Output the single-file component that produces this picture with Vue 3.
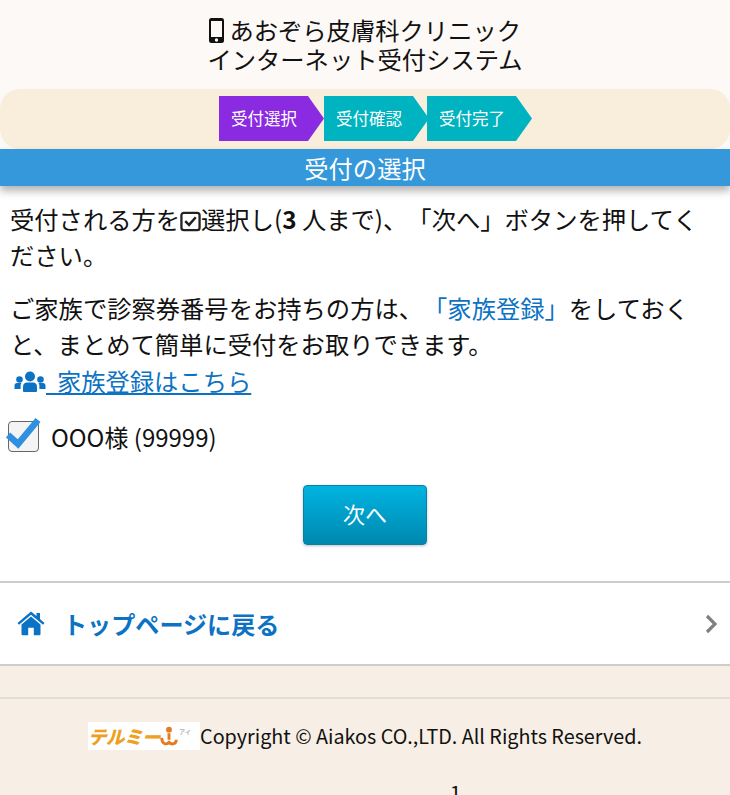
<script setup>
const steps = [
  { label: '受付選択', active: true },
  { label: '受付確認', active: false },
  { label: '受付完了', active: false },
];
</script>

<template>
  <div class="page">
    <header class="head">
      <h1 class="title">
        <svg class="phone" viewBox="0 0 15 25" width="15" height="25">
          <path fill="#111" fill-rule="evenodd" d="M2.500 0h10A2.500 2.500 0 0 1 15 2.500v20a2.500 2.500 0 0 1-2.500 2.500h-10A2.500 2.500 0 0 1 0 22.500v-20A2.500 2.500 0 0 1 2.500 0zM2 3v16h11V3zM7.500 20.300a1.700 1.700 0 1 0 0 3.400 1.700 1.700 0 0 0 0-3.400z"/>
        </svg>
        あおぞら皮膚科クリニック<br>インターネット受付システム
      </h1>
    </header>

    <div class="stepbar">
      <div v-for="s in steps" :key="s.label" :class="['step', { active: s.active }]">{{ s.label }}</div>
    </div>

    <h2 class="heading">受付の選択</h2>

    <main class="content">
      <p class="para">受付される方を<svg class="inline-check" viewBox="0 0 22 22" width="21" height="21"><rect x="1.500" y="2" width="19" height="18" rx="2.500" fill="none" stroke="#222" stroke-width="2.400"/><path d="M5.500 10.500l4 4 7-8" fill="none" stroke="#222" stroke-width="2.600"/></svg>選択し(<b>3</b> 人まで)、「次へ」ボタンを押してください。</p>
      <p class="para second">ご家族で診察券番号をお持ちの方は、<span class="blue">「家族登録」</span>をしておくと、まとめて簡単に受付をお取りできます。</p>
      <a class="family" href="#">
        <svg class="users" viewBox="0 0 32 22" width="32" height="22">
          <g fill="#0c72c4">
            <circle cx="16" cy="5.500" r="5"/>
            <circle cx="5.500" cy="8.500" r="3.300"/>
            <circle cx="26.500" cy="8.500" r="3.300"/>
            <path d="M9 20v-4.500c0-2.500 2-4 4-4h6c2 0 4 1.500 4 4V20a1 1 0 0 1-1 1H10a1 1 0 0 1-1-1z"/>
            <path d="M0.500 18v-3.500c0-1.500 1-2.500 2.500-2.500h4.500c-.6.800-.9 1.800-.9 3v3z"/>
            <path d="M31.500 18v-3.500c0-1.500-1-2.500-2.500-2.500h-4.500c.6.800.9 1.800.9 3v3z"/>
          </g>
        </svg>
        <span class="family-text">&nbsp;&nbsp;家族登録はこちら</span>
      </a>

      <label class="person">
        <span class="box">
          <svg class="tick" viewBox="0 0 36 34" width="36" height="34">
            <path d="M2 19l10 9L32 4" fill="none" stroke="#2f8fe0" stroke-width="6.500"/>
          </svg>
        </span>
        <span>OOO様 (99999)</span>
      </label>

      <div class="btn-wrap">
        <button class="next" type="button">次へ</button>
      </div>
    </main>

    <a class="back" href="#">
      <svg class="home" viewBox="0 0 28 25" width="28" height="25">
        <path fill="#0c72c4" d="M14 5.500L4.500 13.500V23a1.200 1.200 0 0 0 1.200 1.200h5.500v-7.500h5.600v7.500h5.500a1.200 1.200 0 0 0 1.200-1.200v-9.500z"/>
        <path fill="#0c72c4" d="M14 0.500L19.500 5V2h3.500v6l4.500 3.900-1.500 1.800L14 3.800 2 13.700.5 11.900z"/>
      </svg>
      <span class="back-text">トップページに戻る</span>
      <svg class="chev" viewBox="0 0 13 20" width="13" height="20">
        <path d="M2 2l8 8-8 8" fill="none" stroke="#808080" stroke-width="3.200"/>
      </svg>
    </a>

    <footer class="foot">
      <div class="copy">
        <span class="logo">
          <span class="logo-main">テルミー</span>
          <svg class="logo-mark" viewBox="0 0 22 24" width="20" height="22">
            <circle cx="11" cy="5" r="3.200" fill="#e67a22"/>
            <path d="M11 9v7M3 14c0 7 5 8 8 5 3 3 8 2 8-3" fill="none" stroke="#e67a22" stroke-width="3.200"/>
          </svg>
          <span class="logo-small">アイ</span>
        </span>
        <span>Copyright © Aiakos CO.,LTD. All Rights Reserved.</span>
      </div>
      <div class="tail">1</div>
    </footer>
  </div>
</template>

<style>
html, body {
  margin: 0;
  background: #f7efe5;
}
</style>

<style scoped>
.page {
  width: 730px;
  height: 795px;
  overflow: hidden;
  background: #fdf9f6;
  font-family: "Noto Sans CJK JP", "Noto Sans", sans-serif;
  color: #111;
  text-spacing-trim: space-all;
  text-autospace: no-autospace;
}
.head {
  height: 89px;
  padding-top: 15px;
  box-sizing: border-box;
}
.title {
  margin: 0;
  font-size: 24.300px;
  font-weight: 400;
  line-height: 29px;
  text-align: center;
}
.phone {
  vertical-align: -3px;
}
.stepbar {
  height: 60px;
  box-sizing: border-box;
  padding: 7px 0 0 219px;
  display: flex;
  background: #f9eedb;
  border-radius: 20px;
}
.step {
  width: 105px;
  margin-right: -2px;
  height: 45px;
  padding-left: 12px;
  box-sizing: border-box;
  color: #fff;
  font-size: 16.500px;
  line-height: 45px;
  background: #00b3c0;
  clip-path: polygon(0 0, calc(100% - 16px) 0, 100% 50%, calc(100% - 16px) 100%, 0 100%);
}
.step.active {
  background: #8a2be2;
  margin-right: 0;
}
.heading {
  margin: 0;
  height: 37px;
  background: #3498db;
  color: #fff;
  font-size: 24.300px;
  font-weight: 400;
  line-height: 38px;
  text-align: center;
  box-shadow: 0 5px 8px rgba(0, 0, 0, 0.3);
  position: relative;
}
.content {
  background: #fff;
  height: 395px;
  padding: 15px 10px 0;
  box-sizing: border-box;
}
.para {
  margin: 0;
  font-size: 24.300px;
  line-height: 36.450px;
}
.para.second {
  margin-top: 16px;
}
.inline-check {
  vertical-align: -3px;
}
.blue {
  color: #0c72c4;
}
.family {
  display: block;
  margin-left: 4px;
  margin-top: -1px;
  font-size: 24.300px;
  line-height: 37px;
  color: #0c72c4;
  text-decoration: none;
}
.users {
  vertical-align: -2px;
}
.family-text {
  text-decoration: underline;
}
.person {
  margin-top: 21px;
  display: flex;
  align-items: center;
  gap: 12px;
  font-size: 24px;
  line-height: 34px;
}
.box {
  position: relative;
  width: 29px;
  height: 29px;
  margin-left: -2px;
  border: 1.500px solid #666;
  border-radius: 4px;
  background: #f4f4f4;
}
.tick {
  position: absolute;
  left: -3px;
  top: -6px;
}
.btn-wrap {
  margin-top: 31px;
  text-align: center;
}
.next {
  width: 124px;
  height: 60px;
  padding: 0 0 3px;
  border: 1px solid #0a7fa8;
  border-radius: 4px;
  background: linear-gradient(#00b4e0, #0088b0);
  color: #fff;
  font-family: inherit;
  font-size: 22px;
  box-shadow: 0 1px 3px rgba(0, 0, 0, 0.25);
}
.back {
  display: flex;
  align-items: center;
  height: 85px;
  box-sizing: border-box;
  padding: 0 12px 0 17px;
  background: #fff;
  border-top: 2px solid #ccc;
  border-bottom: 2px solid #ccc;
  text-decoration: none;
}
.back-text {
  flex: 1;
  margin-left: 18px;
  color: #0c72c4;
  font-size: 24.100px;
  font-weight: 700;
}
.foot {
  height: 130px;
  padding-top: 31px;
  background: #f7efe5;
}
.copy {
  display: flex;
  align-items: center;
  justify-content: center;
  border-top: 2px solid #e2dcd6;
  padding-top: 23px;
  font-size: 19.750px;
  line-height: 28px;
}
.logo {
  display: flex;
  align-items: center;
  width: 112px;
  height: 28px;
  background: #fff;
  overflow: hidden;
}
.logo-main {
  color: #eea01f;
  font-size: 18.500px;
  font-weight: 900;
  font-style: italic;
  letter-spacing: -0.500px;
  white-space: nowrap;
}
.logo-mark {
  flex: none;
  margin-left: -1px;
}
.logo-small {
  color: #888;
  font-size: 6px;
  white-space: nowrap;
  margin-top: -8px;
}
.tail {
  margin-top: 29px;
  padding-left: 181px;
  text-align: center;
  font-size: 20px;
  line-height: 28px;
}
</style>
